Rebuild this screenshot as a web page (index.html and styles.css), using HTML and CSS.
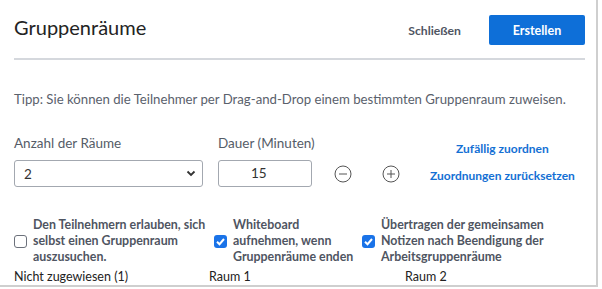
FILE: index.html
```html
<!DOCTYPE html>
<html lang="de">
<head>
    <meta charset="UTF-8" />
    <meta name="viewport" content="width=device-width, initial-scale=1" />
    <title>Gruppenräume</title>
    <link rel="stylesheet" href="styles.css">
</head>
<body>

    <div class="modal">
        <div class="modal-header">
            <h1 class="modal-title">Gruppenräume</h1>
            <div class="header-actions">
                <button class="close-button">Schließen</button>
                <button class="create-button">Erstellen</button>
            </div>
        </div>

        <p class="tip">Tipp: Sie können die Teilnehmer per Drag-and-Drop einem bestimmten Gruppenraum zuweisen.</p>

        <div class="controls">
            <div class="field field-rooms">
                <label for="rooms">Anzahl der Räume</label>
                <div class="select-box" id="rooms">
                    <span>2</span>
                    <svg width="10" height="7" viewBox="0 0 10 7"><path d="M1.5 1.5 L5 5 L8.5 1.5" fill="none" stroke="#333" stroke-width="1.8"/></svg>
                </div>
            </div>
            <div class="field field-duration">
                <label for="duration">Dauer (Minuten)</label>
                <div class="duration-row">
                    <div class="number-box" id="duration">15</div>
                    <button class="round-button" aria-label="weniger">
                        <svg width="18" height="18" viewBox="0 0 18 18"><circle cx="9" cy="9" r="8" fill="none" stroke="#555" stroke-width="1"/><path d="M5 9 H13" stroke="#555" stroke-width="1"/></svg>
                    </button>
                    <button class="round-button" aria-label="mehr">
                        <svg width="18" height="18" viewBox="0 0 18 18"><circle cx="9" cy="9" r="8" fill="none" stroke="#555" stroke-width="1"/><path d="M5 9 H13 M9 5 V13" stroke="#555" stroke-width="1"/></svg>
                    </button>
                </div>
            </div>
            <div class="links">
                <a href="#">Zufällig zuordnen</a>
                <a href="#">Zuordnungen zurücksetzen</a>
            </div>
        </div>

        <div class="options">
            <label class="option">
                <span class="check"></span>
                <span>Den Teilnehmern erlauben, sich<br>selbst einen Gruppenraum<br>auszusuchen.</span>
            </label>
            <label class="option">
                <span class="check checked"><svg width="13" height="13" viewBox="0 0 13 13"><path d="M3 6.8 L5.5 9.2 L10 4" fill="none" stroke="#fff" stroke-width="2"/></svg></span>
                <span>Whiteboard<br>aufnehmen, wenn<br>Gruppenräume enden</span>
            </label>
            <label class="option">
                <span class="check checked"><svg width="13" height="13" viewBox="0 0 13 13"><path d="M3 6.8 L5.5 9.2 L10 4" fill="none" stroke="#fff" stroke-width="2"/></svg></span>
                <span>Übertragen der gemeinsamen<br>Notizen nach Beendigung der<br>Arbeitsgruppenräume</span>
            </label>
        </div>

        <div class="room-heads">
            <div>Nicht zugewiesen (1)</div>
            <div>Raum 1</div>
            <div>Raum 2</div>
        </div>
    </div>

</body>
</html>
```

FILE: styles.css
```css
body {
    margin: 0;
    font-family: Lato, "Open Sans", sans-serif;
    background-color: #fff;
}
.modal {
    width: 571px;
    height: 285px;
    padding: 0 11px 0 14px;
    overflow: hidden;
    border-right: 2px solid #cfcfcf;
    border-bottom: 2px solid #cfcfcf;
    background-color: #fff;
}
.modal-header {
    display: flex;
    align-items: center;
    justify-content: space-between;
    height: 58px;
    border-bottom: 2px solid #d5d8dd;
}
.modal-title {
    margin: 0 0 5px 0;
    font-size: 20px;
    font-weight: normal;
    color: #232323;
}
.header-actions {
    display: flex;
    align-items: center;
    gap: 28px;
    margin-top: 2px;
}
button {
    font-family: inherit;
    cursor: pointer;
    border: none;
    background: none;
    padding: 0;
}
.close-button {
    font-size: 12.2px;
    font-weight: bold;
    color: #4f5562;
}
.create-button {
    width: 96px;
    height: 30px;
    border-radius: 2px;
    background-color: #0e6fd8;
    color: #fff;
    font-size: 12.5px;
    font-weight: bold;
}
.tip {
    margin: 29px 0 0 0;
    line-height: 20px;
    font-size: 13.2px;
    color: #5a616c;
}
.controls {
    display: flex;
    margin-top: 24px;
}
.field label {
    display: block;
    line-height: 20px;
    font-size: 13.5px;
    color: #555c67;
    margin-bottom: 7px;
}
.field-rooms {
    width: 204px;
}
.select-box {
    display: flex;
    align-items: center;
    justify-content: space-between;
    box-sizing: border-box;
    width: 189px;
    height: 27px;
    padding: 0 6px 0 9px;
    border: 1px solid #a3a8b0;
    border-radius: 3px;
    font-size: 13.5px;
    color: #333;
}
.duration-row {
    display: flex;
    align-items: center;
}
.number-box {
    box-sizing: border-box;
    width: 94px;
    height: 27px;
    line-height: 25px;
    padding-left: 32px;
    border: 1px solid #a3a8b0;
    border-radius: 3px;
    font-size: 13.5px;
    color: #333;
}
.round-button {
    display: flex;
    margin-left: 22px;
    margin-right: 8px;
}
.round-button + .round-button {
    margin-left: 22px;
}
.links {
    display: flex;
    flex-direction: column;
    align-items: center;
    gap: 10px;
    margin-left: 22px;
    padding-top: 7px;
}
.links a {
    font-size: 12px;
    font-weight: bold;
    color: #1470d4;
    text-decoration: none;
    line-height: 17px;
}
.options {
    display: grid;
    grid-template-columns: 200px 148px auto;
    margin-top: 30px;
}
.option {
    display: flex;
    align-items: center;
    gap: 6px;
    font-size: 12.4px;
    font-weight: bold;
    line-height: 16px;
    color: #4f5562;
}
.check {
    flex: none;
    display: flex;
    box-sizing: border-box;
    width: 13px;
    height: 13px;
    border: 1px solid #6c717b;
    border-radius: 3px;
}
.check.checked {
    border: none;
    background-color: #1a73e8;
}
.room-heads {
    display: grid;
    grid-template-columns: 195px 196px auto;
    margin-top: 3px;
    font-size: 12.5px;
    line-height: 18px;
    color: #222;
}
```
